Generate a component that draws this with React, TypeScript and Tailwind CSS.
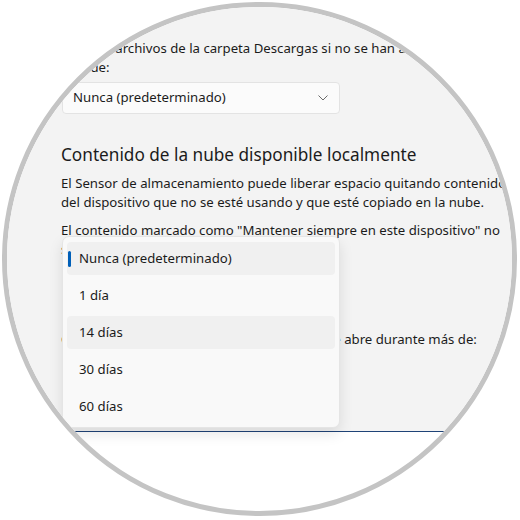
import React from "react";

const items = [
  { label: "Nunca (predeterminado)", selected: true, hover: false },
  { label: "1 día", selected: false, hover: false },
  { label: "14 días", selected: false, hover: true },
  { label: "30 días", selected: false, hover: false },
  { label: "60 días", selected: false, hover: false },
];

export default function App() {
  return (
    <div
      className="w-[520px] h-[520px] bg-white overflow-hidden pt-[2px] pl-[2px]"
      style={{ fontFamily: '"Noto Sans", "Open Sans", sans-serif' }}
    >
      <div className="w-[515px] h-[514px] rounded-full border-[5px] border-[#c4c4c4] overflow-hidden bg-white">
        <div className="relative h-[425px] border-b border-[#1f4377] bg-[#f3f3f3] pl-[54px] pt-[32px] text-[#1b1b1b] text-[13.2px]">
          <p className="leading-[19px] whitespace-nowrap">
            Eliminar archivos de la carpeta Descargas si no se han abierto durante
            <br />
            más de:
          </p>
          <div className="mt-[5px] ml-[1px] w-[278px] h-[32px] flex items-center justify-between rounded-[4px] border border-[#e3e3e3] bg-[#fbfbfb] pl-[10px] pr-[11px]">
            <span>Nunca (predeterminado)</span>
            <svg width="10" height="6" viewBox="0 0 10 6" fill="none">
              <path d="M0.5 0.5 L5 5 L9.5 0.5" stroke="#6b6b6b" strokeWidth="1" />
            </svg>
          </div>
          <h2 className="mt-[27px] text-[17.2px] leading-[28px] font-normal">
            Contenido de la nube disponible localmente
          </h2>
          <p className="mt-[5px] leading-[19px] whitespace-nowrap">
            El Sensor de almacenamiento puede liberar espacio quitando contenido
            <br />
            del dispositivo que no se esté usando y que esté copiado en la nube.
          </p>
          <p className="mt-[9px] leading-[19px] whitespace-nowrap">
            El contenido marcado como "Mantener siempre en este dispositivo" no
            <br />
            se verá afectado.
          </p>
          <p className="mt-[71px] leading-[19px] whitespace-nowrap">
            Convertir a solo en línea el contenido si no se abre durante más de:
          </p>

          <div className="absolute left-[55px] top-[229px] w-[278px] h-[192px] rounded-[7px] border border-[#e5e5e5] bg-[#f9f9f9] shadow-[0_6px_14px_rgba(0,0,0,0.10)] px-[4px] pt-[5px] flex flex-col gap-[4px]">
            {items.map((it) => (
              <div
                key={it.label}
                className={
                  "relative h-[33px] flex items-center pl-[12px] rounded-[4px] " +
                  (it.selected || it.hover ? "bg-[#f0f0f0]" : "")
                }
              >
                {it.selected && (
                  <span className="absolute left-[1px] top-[9px] w-[3px] h-[16px] rounded-full bg-[#005fb8]" />
                )}
                {it.label}
              </div>
            ))}
          </div>
        </div>
      </div>
    </div>
  );
}
